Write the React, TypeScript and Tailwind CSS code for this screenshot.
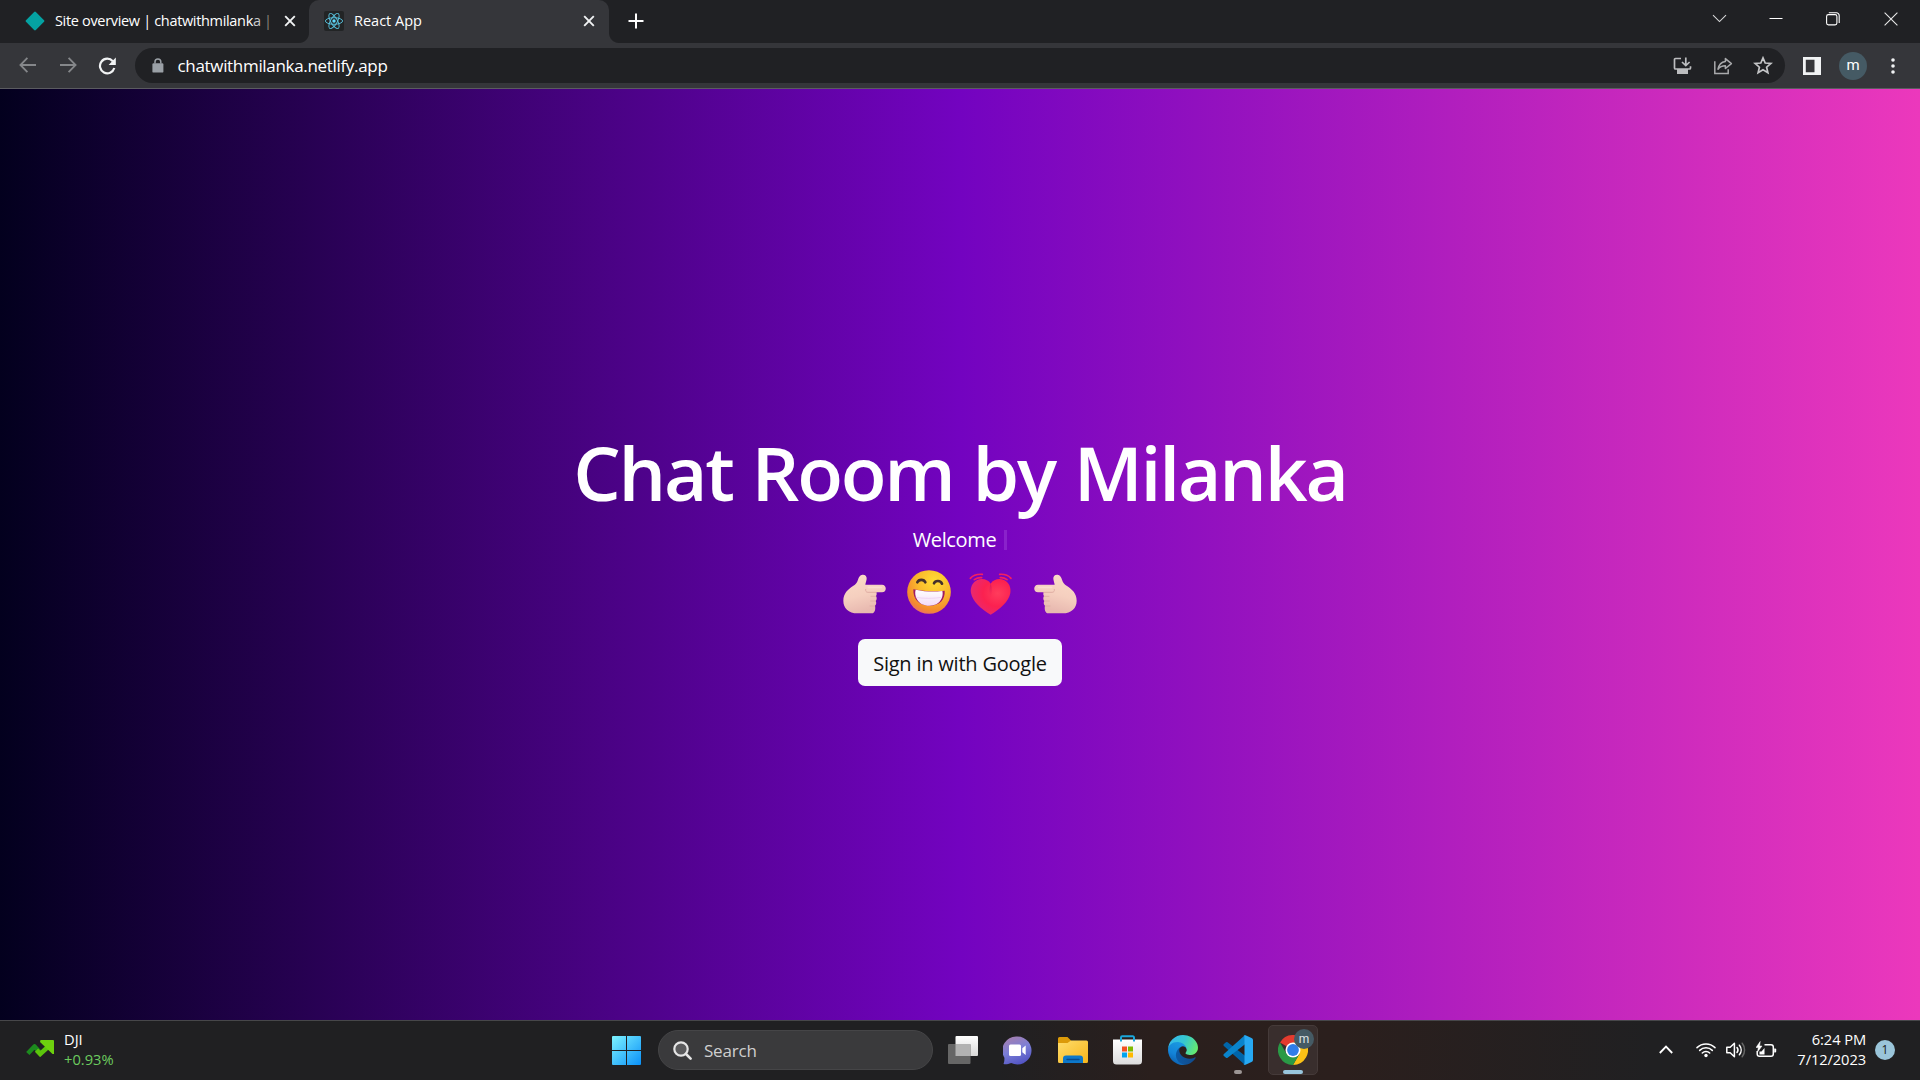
import React from "react";

function CloseGlyph() {
  return (
    <svg width="12" height="12" viewBox="0 0 12 12" stroke="#f1f3f4" strokeWidth="1.9" fill="none">
      <path d="M1.2 1.2 10.8 10.8M10.8 1.2 1.2 10.8" />
    </svg>
  );
}

function ReactMark() {
  return (
    <svg width="20" height="20" viewBox="0 0 20 20">
      <rect width="20" height="20" rx="2" fill="#222425" />
      <g fill="none" stroke="#58c0dc" strokeWidth="0.95">
        <ellipse cx="10" cy="10" rx="8.6" ry="3.3" />
        <ellipse cx="10" cy="10" rx="8.6" ry="3.3" transform="rotate(60 10 10)" />
        <ellipse cx="10" cy="10" rx="8.6" ry="3.3" transform="rotate(120 10 10)" />
      </g>
      <circle cx="10" cy="10" r="1.7" fill="#61dafb" />
    </svg>
  );
}

function TabStrip() {
  return (
    <div className="flex h-[43px] bg-[#202124]">
      <div className="flex h-[43px] w-[309px] items-center pb-px pl-[25px]">
        <svg width="20" height="20" viewBox="0 0 20 20">
          <path d="M10 1.8 18.2 10 10 18.2 1.8 10Z" fill="#05a2a2" stroke="#05a2a2" strokeWidth="2.4" strokeLinejoin="round" />
        </svg>
        <div className="ml-[10px] w-[229px] text-[14.5px] leading-5 tracking-[-0.33px] whitespace-nowrap text-white">
          Site overview | chatwithmilank<span className="text-[#c9cacc]">a</span>{" "}
          <span className="text-[#8a8378]">|</span>
        </div>
        <CloseGlyph />
      </div>
      <div className="flex h-[43px] w-[300px] items-center rounded-t-[10px] bg-[#35363a] pb-px pl-[15px]">
        <ReactMark />
        <span className="ml-[10px] w-[229px] text-[14.5px] leading-5 text-white">React App</span>
        <CloseGlyph />
      </div>
      <div className="flex h-[43px] flex-1 items-center pb-px pl-[19px]">
        <svg width="16" height="16" viewBox="0 0 16 16" stroke="#fff" strokeWidth="2">
          <path d="M8 .5v15M.5 8h15" />
        </svg>
      </div>
      <div className="flex h-[37px] items-center">
        <svg width="15" height="9" viewBox="0 0 15 9" fill="none" stroke="#d6d7d8" strokeWidth="1.1" className="mr-[42px]">
          <path d="M1 1.2 7.5 7.6 14 1.2" />
        </svg>
        <svg width="14" height="14" viewBox="0 0 14 14" stroke="#fff" strokeWidth="1" className="mr-[43px]">
          <path d="M.5 6.5h13" />
        </svg>
        <svg width="14" height="14" viewBox="0 0 14 14" fill="none" stroke="#fff" strokeWidth="1.1" className="mr-[44px]">
          <rect x=".6" y="2.6" width="10.3" height="10.3" rx="1.8" />
          <path d="M2.8.7h7.6a2.8 2.8 0 0 1 2.8 2.8v7.6" />
        </svg>
        <svg width="14" height="14" viewBox="0 0 14 14" stroke="#e8e8e8" strokeWidth="1.1" className="mr-[22px]">
          <path d="M.6.6 13.4 13.4M13.4.6.6 13.4" />
        </svg>
      </div>
    </div>
  );
}

/* Concave corners where the active tab meets the strip */
function TabFlares() {
  return (
    <>
      <div className="absolute top-[33px] left-[299px] size-[10px] bg-[radial-gradient(circle_at_0_0,#202124_9.5px,#35363a_10.5px)]" />
      <div className="absolute top-[33px] left-[609px] size-[10px] bg-[radial-gradient(circle_at_100%_0,#202124_9.5px,#35363a_10.5px)]" />
    </>
  );
}

function Toolbar() {
  return (
    <div className="flex h-[46px] items-center border-b border-[#5b5c60] bg-[#35363a] pl-[19px]">
      <svg width="18" height="16" viewBox="0 0 18 16" fill="none" stroke="#85878a" strokeWidth="1.8" className="mb-px">
        <path d="M17 8H1.6M8.4.8 1.4 8l7 7.2" />
      </svg>
      <svg width="18" height="16" viewBox="0 0 18 16" fill="none" stroke="#85878a" strokeWidth="1.8" className="mb-px ml-[22px]">
        <path d="M1 8h15.4M9.6.8l7 7.2-7 7.2" />
      </svg>
      <svg width="19" height="18" viewBox="0 0 19 18" className="ml-[21px]">
        <path d="M14.8 4.2A7.3 7.3 0 1 0 16.3 11" fill="none" stroke="#f1f3f4" strokeWidth="2.2" />
        <path d="M17.8.6V8h-7.2Z" fill="#f1f3f4" />
      </svg>
      <div className="ml-[18px] flex h-[35px] w-[1650px] items-center rounded-full bg-[#202124] pl-[17px]">
        <svg width="12" height="15" viewBox="0 0 12 15">
          <rect x=".4" y="5.2" width="11" height="9.4" rx="1.2" fill="#9aa0a6" />
          <path d="M3 5.5V3.8a2.9 2.9 0 0 1 5.8 0v1.7" fill="none" stroke="#9aa0a6" strokeWidth="1.5" />
        </svg>
        <span className="ml-[13.5px] flex-1 text-[17px] leading-6 tracking-[-0.32px] text-white">chatwithmilanka.netlify.app</span>
        <svg width="19" height="18" viewBox="0 0 19 18" fill="none" stroke="#bcbdbf" strokeWidth="1.7">
          <path d="M8 1.5H2.5a1 1 0 0 0-1 1V11a1 1 0 0 0 1 1h14a1 1 0 0 0 1-1V9.2M12.8.4v7.2M9 5l3.8 3.6L16.6 5" />
          <path d="M4 12h11v5H4z" fill="#bcbdbf" stroke="none" />
        </svg>
        <svg width="20" height="18" viewBox="0 0 20 18" fill="none" stroke="#a9aaac" strokeWidth="1.5" className="ml-[21px]">
          <path d="M1.8 4.2v12.3h13.4v-4.3" />
          <path d="M12.4 1.6 18.4 6.6l-6 4.9V8.8c-3.4 0-5.6.9-7.4 3.4C5.7 8 8 5 12.4 4.4Z" strokeLinejoin="round" />
        </svg>
        <svg width="20" height="19" viewBox="0 0 20 19" fill="none" stroke="#c4c5c7" strokeWidth="1.7" className="mr-[12px] ml-[20px]">
          <path d="M10 1.9 12.2 7l5.7.5-4.3 3.7 1.3 5.5L10 13.8l-4.9 2.9 1.3-5.5L2.100 7.500l5.700-.5Z" />
        </svg>
      </div>
      <svg width="18" height="18" viewBox="0 0 18 18" className="ml-[18px]">
        <path d="M0 0h18v18H0ZM2.8 2.8v12.4h8.700V2.800Z" fillRule="evenodd" fill="#f1f3f4" />
      </svg>
      <div className="ml-[18px] flex size-7 items-center justify-center rounded-full bg-[#455a64] font-[Roboto] text-[15px] leading-none text-white">
        <span className="pb-px">m</span>
      </div>
      <svg width="4" height="16" viewBox="0 0 4 16" fill="#f1f3f4" className="ml-[23.5px]">
        <circle cx="2" cy="2" r="1.8" />
        <circle cx="2" cy="8" r="1.8" />
        <circle cx="2" cy="14" r="1.8" />
      </svg>
    </div>
  );
}

function PointingHand({ flipped = false }: { flipped?: boolean }) {
  const id = flipped ? "handL" : "handR";
  return (
    <svg width="44" height="40" viewBox="24 40 132 120" className={flipped ? "-scale-x-100" : ""}>
      <defs>
        <linearGradient id={id} x1="0" y1="0" x2="0.3" y2="1">
          <stop offset="0" stopColor="#fbdcc8" />
          <stop offset="0.6" stopColor="#f5cfbf" />
          <stop offset="1" stopColor="#e8b9b0" />
        </linearGradient>
      </defs>
      <path
        fill={`url(#${id})`}
        d="M82 42c9-1 14 5 13 13-1 7-3 11-4 17h50c15 0 15 23 0 23h-17c2 5 1 9-1 11 3 5 3 11-1 15 3 5 2 11-2 14 2 7 1 23-10 23H68C40 158 25 142 25 120c0-22 14-34 29-44 9-6 12-10 15-19 2-8 6-14 13-15Z"
      />
      <g fill="none" stroke="#dba79d" strokeWidth="2.5" strokeLinecap="round">
        <path d="M123 95H99c-6 0-8-4-7-9" />
        <path d="M122 107h-14M121 121h-14M119 136h-14" opacity=".8" />
      </g>
      <path d="M100 80h39" stroke="#fde7d8" strokeWidth="5" strokeLinecap="round" opacity=".6" />
    </svg>
  );
}

function GrinFace() {
  return (
    <svg width="44" height="44" viewBox="216 28 132 132">
      <defs>
        <radialGradient id="face" cx="0.62" cy="0.25" r="0.85">
          <stop offset="0" stopColor="#ffdc35" />
          <stop offset="0.45" stopColor="#fbb92c" />
          <stop offset="0.8" stopColor="#f3892f" />
          <stop offset="1" stopColor="#e75f86" />
        </radialGradient>
        <linearGradient id="teeth" x1="0" y1="0" x2="0" y2="1">
          <stop offset="0" stopColor="#ffffff" />
          <stop offset="1" stopColor="#f3dbf8" />
        </linearGradient>
      </defs>
      <circle cx="282" cy="94" r="65.5" fill="url(#face)" />
      <g fill="none" stroke="#45302c" strokeWidth="8" strokeLinecap="round">
        <path d="M247 65c4-10 20-10 24 0M297 68c4-10 20-9 24 1" />
      </g>
      <path d="M235 86c30 6 64 8 94 4 2 25-14 45-46 45s-49-20-48-49Z" fill="#a01a62" />
      <path d="M242 87c28 6 53 7 80 4 2 8 1 17-3 24-8 15-20 20-36 20s-30-6-38-21c-4-7-6-18-3-27Z" fill="url(#teeth)" />
      <path d="M242 110c24 4 54 4 78 0" stroke="#ecc8ee" strokeWidth="2" fill="none" />
    </svg>
  );
}

function BeatingHeart() {
  return (
    <svg width="44" height="42" viewBox="28 40 132 126">
      <defs>
        <radialGradient id="heart" cx="0.68" cy="0.4" r="0.75">
          <stop offset="0" stopColor="#ff3c5c" />
          <stop offset="0.5" stopColor="#fb2150" />
          <stop offset="1" stopColor="#e52a78" />
        </radialGradient>
        <linearGradient id="fold" x1="0" y1="0" x2="0" y2="1">
          <stop offset="0" stopColor="#c81560" stopOpacity=".7" />
          <stop offset="1" stopColor="#fb2150" stopOpacity="0" />
        </linearGradient>
      </defs>
      <path d="M93 72c8-13 26-17 40-11 15 7 22 23 19 39-4 25-30 48-59 65-29-17-55-40-59-65-3-16 4-32 19-39 14-6 32-2 40 11Z" fill="url(#heart)" />
      <path d="M93 72c5 13 5 27 0 44-5-17-5-31 0-44Z" fill="url(#fold)" />
      <g fill="none" stroke="#f5205f" strokeWidth="5" strokeLinecap="round">
        <path d="M32 56c8-9 20-13 36-12M44 60c7-5 13-7 22-6M154 56c-8-9-20-13-34-12M142 60c-7-5-13-7-20-6" />
      </g>
    </svg>
  );
}

function Welcome() {
  return (
    <main className="flex h-[931px] flex-col items-center bg-[linear-gradient(to_right,#03001e,#7303c0,#ec38bc)] pt-[338px] text-white">
      <h1 className="h-[90px] text-[75px] leading-[90px] font-semibold tracking-[-2.2px] whitespace-nowrap [word-spacing:1.5px]">Chat Room by Milanka</h1>
      <p className="mt-2 flex h-[30px] items-center text-[20px] leading-[30px] tracking-[-0.35px]">
        Welcome
        <span className="ml-[8px] h-[20px] w-[3px] bg-[#8a22cb]" />
      </p>
      <div className="mt-[15px] flex h-11 items-center">
        <div className="mt-[3px]">
          <PointingHand />
        </div>
        <div className="ml-5">
          <GrinFace />
        </div>
        <div className="mt-[4px] ml-[18px]">
          <BeatingHeart />
        </div>
        <div className="mt-[3px] ml-5">
          <PointingHand flipped />
        </div>
      </div>
      <button className="mt-[25px] h-[47px] w-[204px] rounded-[7px] bg-[#f8f9fa] pt-[3px] text-[20px] leading-[30px] tracking-[-0.21px] whitespace-nowrap text-[#111]">
        Sign in with Google
      </button>
    </main>
  );
}

function StartIcon() {
  return (
    <svg width="29" height="29" viewBox="0 0 29 29">
      <defs>
        <linearGradient id="win" gradientUnits="userSpaceOnUse" x1="0" y1="0" x2="29" y2="29">
          <stop offset="0" stopColor="#7df3ff" />
          <stop offset="1" stopColor="#0a90f8" />
        </linearGradient>
      </defs>
      <path fill="url(#win)" d="M1 0h13v14H0V1a1 1 0 0 1 1-1ZM15 0h13a1 1 0 0 1 1 1v13H15ZM0 15h14v14H1a1 1 0 0 1-1-1ZM15 15h14v13a1 1 0 0 1-1 1H15Z" />
    </svg>
  );
}

function TaskViewIcon() {
  return (
    <svg width="30" height="28" viewBox="0 0 30 28">
      <defs>
        <linearGradient id="tvA" x1="0" y1="0" x2="0" y2="1">
          <stop offset="0" stopColor="#fff" />
          <stop offset="1" stopColor="#d8d8d8" />
        </linearGradient>
      </defs>
      <rect x="7.5" y="0" width="22.5" height="20" rx="1" fill="url(#tvA)" />
      <rect x="0" y="8" width="22.5" height="20" rx="1" fill="#666" />
      <path d="M7.5 8h15v12h-15z" fill="#b2b2b2" />
    </svg>
  );
}

function ChatIcon() {
  return (
    <svg width="29" height="29" viewBox="0 0 29 29">
      <defs>
        <linearGradient id="chat" x1="0.2" y1="0" x2="0.6" y2="1">
          <stop offset="0" stopColor="#a77fae" />
          <stop offset="0.5" stopColor="#7b7fd6" />
          <stop offset="1" stopColor="#5254c4" />
        </linearGradient>
      </defs>
      <path d="M14.5.5a14 14 0 1 1-6.3 26.500C5 28.300 2.500 28.500.5 28c.8-1.600 1-4 .9-6.300A14 14 0 0 1 14.500.5Z" fill="url(#chat)" />
      <rect x="6" y="8.5" width="12" height="11.5" rx="1.5" fill="#fff" />
      <path d="M19.3 12.3 22.7 9.5v9.500l-3.400-2.800Z" fill="#fff" />
    </svg>
  );
}

function FolderIcon() {
  return (
    <svg width="30" height="27" viewBox="0 0 30 27">
      <defs>
        <linearGradient id="folder" x1="0" y1="0" x2="1" y2="1">
          <stop offset="0" stopColor="#ffdc6b" />
          <stop offset="1" stopColor="#f7b61b" />
        </linearGradient>
      </defs>
      <path d="M0 1.5A1.5 1.5 0 0 1 1.5 0h8l3.500 3.500V10H0Z" fill="#dc9a09" />
      <path d="M0 6h9.500L13 3.500h15.500A1.500 1.500 0 0 1 30 5v19.500a1.500 1.500 0 0 1-1.500 1.500h-27A1.500 1.500 0 0 1 0 24.500Z" fill="url(#folder)" />
      <path d="M5 26v-4.500a3 3 0 0 1 3-3h14a3 3 0 0 1 3 3V26Z" fill="#0d78ca" />
      <path d="M9 22.500h12" stroke="#074a8e" strokeWidth="1.4" strokeLinecap="round" />
    </svg>
  );
}

function StoreIcon() {
  return (
    <svg width="29" height="30" viewBox="0 0 29 30">
      <defs>
        <linearGradient id="store" x1="0" y1="0" x2="0" y2="1">
          <stop offset="0" stopColor="#fff" />
          <stop offset="1" stopColor="#dcdcdc" />
        </linearGradient>
      </defs>
      <path d="M0 4.5h29V26a3.500 3.500 0 0 1-3.500 3.500h-22A3.500 3.500 0 0 1 0 26Z" fill="url(#store)" />
      <path d="M8 6.500V2.500A1.200 1.200 0 0 1 9.200 1.300h10.600A1.200 1.200 0 0 1 21 2.500v4" fill="none" stroke="#1ba8dc" strokeWidth="2" />
      <path d="M9 11.500h5v5H9Z" fill="#f25022" />
      <path d="M15 11.500h5v5h-5Z" fill="#7fba00" />
      <path d="M9 17.500h5v5H9Z" fill="#00a4ef" />
      <path d="M15 17.500h5v5h-5Z" fill="#ffb900" />
    </svg>
  );
}

function EdgeIcon() {
  return (
    <svg width="30" height="30" viewBox="0 0 256 256">
      <defs>
        <linearGradient id="eA" x1="0.1" y1="0.5" x2="1" y2="0.5">
          <stop offset="0" stopColor="#0c59a4" />
          <stop offset="1" stopColor="#114a8b" />
        </linearGradient>
        <linearGradient id="eB" x1="0.7" y1="0" x2="0.3" y2="1">
          <stop offset="0" stopColor="#1b9de2" />
          <stop offset="0.6" stopColor="#1383d8" />
          <stop offset="1" stopColor="#0b5cab" />
        </linearGradient>
        <linearGradient id="eC" x1="0" y1="0.3" x2="1" y2="0.6">
          <stop offset="0" stopColor="#35b8ee" />
          <stop offset="0.5" stopColor="#36c7cf" />
          <stop offset="1" stopColor="#66eb6e" />
        </linearGradient>
      </defs>
      <path fill="url(#eA)" d="M231 190.500a94 94 0 0 1-10.500 4.700 102 102 0 0 1-36 6.500c-47.400 0-88.700-32.600-88.700-74.500a31.600 31.600 0 0 1 16.500-27.400c-42.900 1.800-54 46.500-54 72.700 0 74 68.200 81.500 82.900 81.500 7.900 0 19.900-2.300 27-4.600l1.300-.4A128 128 0 0 0 236 195.200a4 4 0 0 0-5-4.700Z" />
      <path fill="url(#eB)" d="M105.700 241.400A79 79 0 0 1 83 220.200 80.700 80.700 0 0 1 112.500 99.800c3.100-1.500 8.500-4.100 15.600-4a32 32 0 0 1 25.700 13 32 32 0 0 1 6.300 18.700c0-.2 24.500-79.600-80-79.600-43.900 0-80 41.700-80 78.200A130 130 0 0 0 12 182.200a128 128 0 0 0 156.400 67 75.500 75.500 0 0 1-62.700-7.800Z" />
      <path fill="url(#eC)" d="M152.300 148.900c-.8 1-3.300 2.500-3.300 5.700 0 2.600 1.700 5.100 4.700 7.200 14.400 10 41.500 8.700 41.500 8.700a59.600 59.600 0 0 0 30.300-8.300 61.400 61.400 0 0 0 30.400-52.900c.3-22.400-8-37.300-11.300-43.900C223.500 23.800 177.700 0 128 0A128 128 0 0 0 0 126.200c.5-36.500 36.800-66 80-66 3.500 0 23.500.3 42 10 16.300 8.600 24.900 19 30.800 29.200 6.200 10.700 7.300 24.100 7.300 29.500s-2.700 13.300-7.800 20Z" />
    </svg>
  );
}

function CodeIcon() {
  return (
    <svg width="30" height="30" viewBox="0 0 30 30">
      <path d="M1.200 8.800 3 7.300a1.300 1.300 0 0 1 1.600 0L23 21.500V29l-1.500.5L.9 11a1.300 1.300 0 0 1 .3-2.200Z" fill="#0065a9" />
      <path d="M1.200 21.200 3 22.700a1.300 1.300 0 0 0 1.600 0L23 8.500V1L21.500.5.9 19a1.300 1.300 0 0 0 .3 2.200Z" fill="#0a84cc" />
      <path d="M20.500.7a2 2 0 0 1 2-.4l6 2.800A2 2 0 0 1 30 5v20a2 2 0 0 1-1.500 1.900l-6 2.800a2 2 0 0 1-2-.4c.3 0 1-.5 1-1.300V2c0-.8-.7-1.300-1-1.300Z" fill="#27a9f3" />
    </svg>
  );
}

function ChromeIcon() {
  return (
    <svg width="30" height="30" viewBox="0 0 30 30">
      <path d="M15 15 2 7.500A15 15 0 0 1 28 7.500H15Z" fill="#e33b2e" />
      <path d="M15 7.500H28A15 15 0 0 1 15 30L21.500 18.700Z" fill="#fbc116" />
      <path d="M2 7.500 8.500 18.700 15 22.500l6.500-3.700L15 30A15 15 0 0 1 2 7.500Z" fill="#2a9a46" />
      <circle cx="15" cy="15" r="7.5" fill="#fff" />
      <circle cx="15" cy="15" r="5.9" fill="#2f7de9" />
    </svg>
  );
}

function Tray() {
  return (
    <div className="flex h-full items-center pb-[2px]">
      <svg width="14" height="9" viewBox="0 0 14 9" fill="none" stroke="#fff" strokeWidth="1.8">
        <path d="M.8 8 7 1.600 13.200 8" />
      </svg>
      <svg width="20" height="16" viewBox="0 0 20 16" fill="none" stroke="#fff" strokeWidth="1.5" strokeLinecap="round" className="ml-[23px]">
        <path d="M1 5.600a12.800 12.800 0 0 1 18 0M3.700 8.400a9 9 0 0 1 12.600 0M6.300 11a5.300 5.300 0 0 1 7.400 0" />
        <circle cx="10" cy="13.5" r="1.7" fill="#fff" stroke="none" />
      </svg>
      <svg width="21" height="18" viewBox="0 0 21 18" fill="none" stroke="#fff" strokeWidth="1.5" strokeLinecap="round" strokeLinejoin="round" className="ml-[10px]">
        <path d="M.8 6.300h3.400L8.400 2.300v13.400L4.200 11.700H.8Z" />
        <path d="M11 6.500a4 4 0 0 1 0 5M13.400 4.200a7.500 7.500 0 0 1 0 9.600" />
        <path d="M16.200 2.200a11 11 0 0 1 0 13.600" stroke="#666" />
      </svg>
      <svg width="21" height="18" viewBox="0 0 21 18" className="ml-[9px]">
        <path d="M8.500 3.700H15a2.300 2.300 0 0 1 2.300 2.300v7a2.300 2.300 0 0 1-2.300 2.300H3.500a2.300 2.300 0 0 1-2.300-2.300v-3" fill="none" stroke="#fff" strokeWidth="1.5" />
        <path d="M18.200 7.500h1a1 1 0 0 1 1 1v2a1 1 0 0 1-1 1h-1Z" fill="#fff" />
        <path d="M3.500 10.500h2L8.500 7v6.500h-5Z" fill="#fff" />
        <path d="M4.200.5 0 6.500h2.300L1.500 11 6 5H3.600Z" fill="#fff" stroke="#fff" strokeWidth=".5" />
      </svg>
      <div className="ml-[19px] w-[70px] pb-[2px] text-right text-[14.7px] leading-5 tracking-[-0.1px] whitespace-nowrap text-white">
        <p>6:24 PM</p>
        <p>7/12/2023</p>
      </div>
      <div className="mr-[25px] ml-[9px] flex size-5 items-center justify-center rounded-full bg-[#9ac5da] text-[12px] leading-none text-[#1b1b1b]">1</div>
    </div>
  );
}

function Taskbar() {
  return (
    <footer className="flex h-[60px] items-center justify-between border-t border-[#47474a] bg-[linear-gradient(to_right,#202022_0%,#202022_52%,#2a1f1d_60%,#2b1f1d_70%,#202022_86%)]">
      <div className="flex h-full w-[611px] items-center pb-[4px] pl-[26px]">
        <svg width="29" height="17" viewBox="0 0 29 17">
          <path d="M1.800 13.500 8.500 6.500l5 5.500" fill="none" stroke="#1c8a1e" strokeWidth="4.6" strokeLinejoin="round" />
          <path d="M10.500 10.200 14.200 14 23.500 5.500" fill="none" stroke="#5cc50c" strokeWidth="4.6" />
          <path d="M14.500 0H27a1 1 0 0 1 1 1v13h-1.500L14 2Z" fill="#6dd00e" />
        </svg>
        <div className="ml-[9px] text-[14.7px] leading-5">
          <p className="text-white">DJI</p>
          <p className="text-[#6ccb5f]">+0.93%</p>
        </div>
      </div>
      <div className="flex h-full items-center pb-px pl-px">
        <StartIcon />
        <div className="ml-[17px] flex h-10 w-[275px] items-center rounded-full border border-[#454547] bg-[#3a3a3c] pl-[14px]">
          <svg width="19" height="19" viewBox="0 0 19 19" fill="none" stroke="#e6e6e6" strokeWidth="2.2" strokeLinecap="round">
            <circle cx="8" cy="8" r="6.7" fill="#5b5b5d" />
            <path d="M13 13l4.600 4.600" strokeWidth="2.6" />
          </svg>
          <span className="ml-[12px] pt-px text-[17px] leading-6 tracking-[-0.2px] text-[#cfcfcf]">Search</span>
        </div>
        <div className="mb-px ml-[15px]">
          <TaskViewIcon />
        </div>
        <div className="ml-[25px]">
          <ChatIcon />
        </div>
        <div className="ml-[26px]">
          <FolderIcon />
        </div>
        <div className="ml-[25px]">
          <StoreIcon />
        </div>
        <div className="ml-[26px]">
          <EdgeIcon />
        </div>
        <div className="relative ml-[25px]">
          <CodeIcon />
          <span className="absolute top-[35px] left-[11px] h-1 w-2 rounded-full bg-[#9c9594]" />
        </div>
        <div className="relative ml-[15px] flex h-[50px] w-[50px] items-center justify-center rounded-[5px] border border-[#453a39] bg-[#392e2d]">
          <ChromeIcon />
          <span className="absolute top-[3px] left-[25px] flex size-5 items-center justify-center rounded-full bg-[#455a64] pb-px font-[Roboto] text-[12px] leading-none text-[#dfe4e6]">m</span>
          <span className="absolute bottom-0 left-[14px] h-1 w-5 rounded-full bg-[#98c5dc]" />
        </div>
      </div>
      <div className="flex h-full w-[602px] justify-end">
        <Tray />
      </div>
    </footer>
  );
}

export default function App() {
  return (
    <div className="relative h-[1080px] w-[1920px] overflow-hidden bg-[#202124] font-['Open_Sans','Noto_Sans',sans-serif]">
      <TabStrip />
      <TabFlares />
      <Toolbar />
      <Welcome />
      <Taskbar />
    </div>
  );
}
